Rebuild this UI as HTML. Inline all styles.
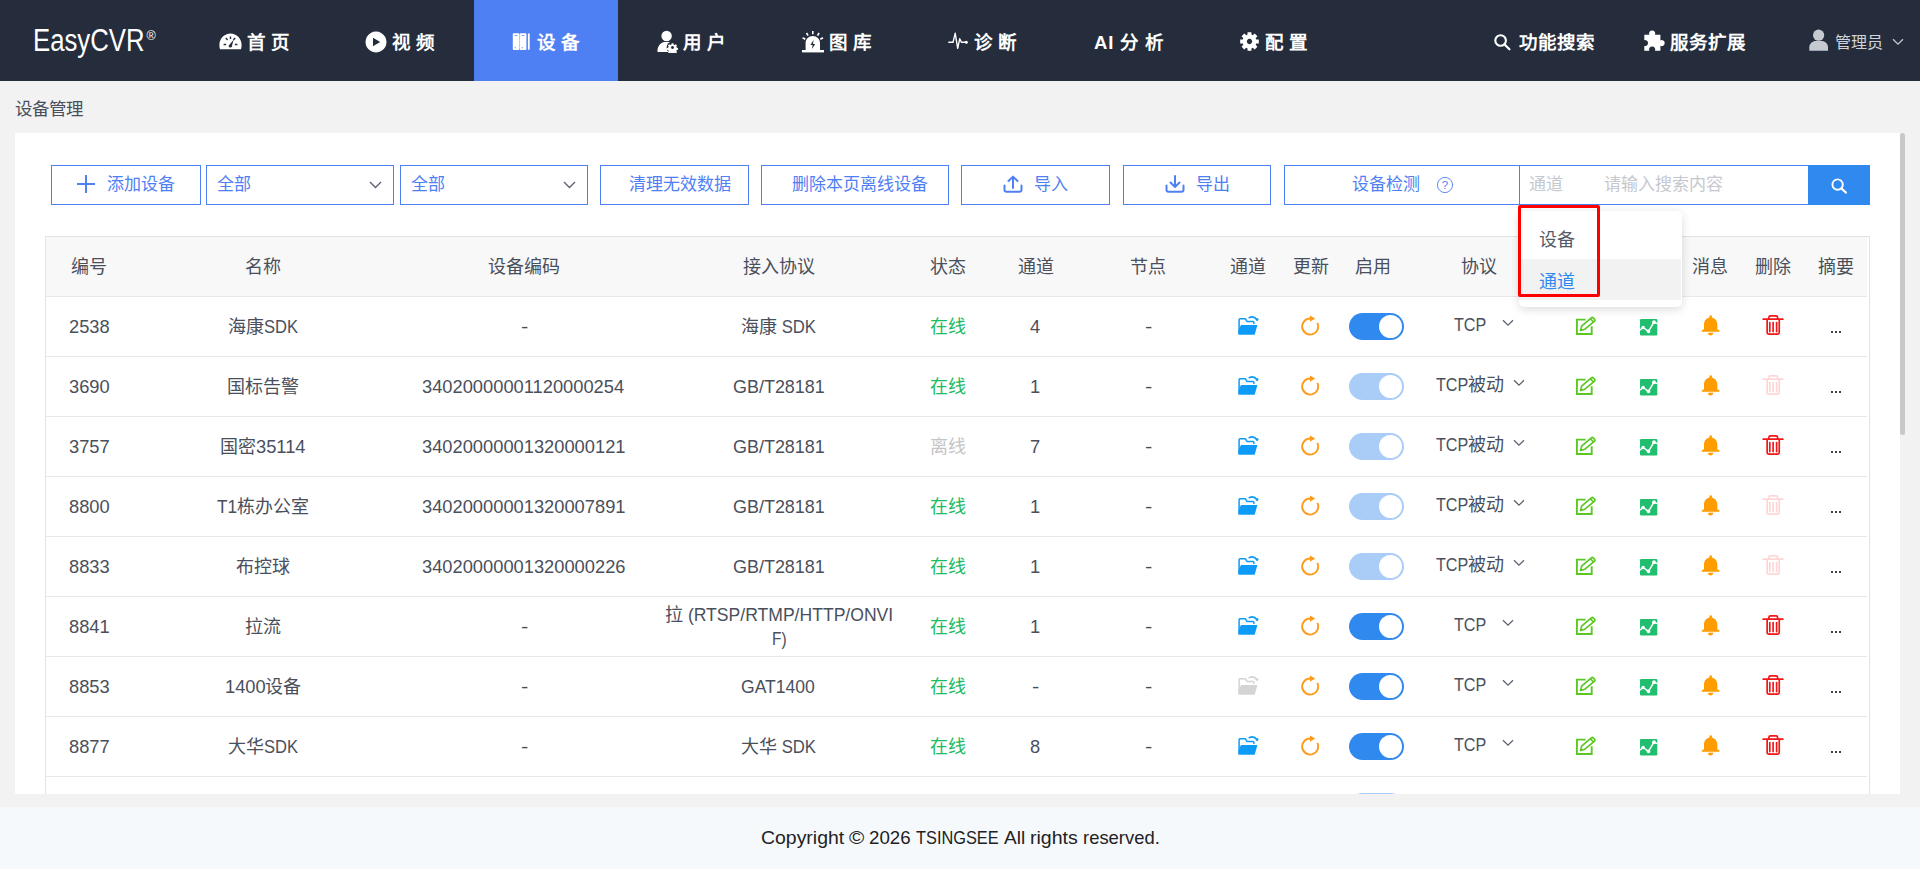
<!DOCTYPE html>
<html lang="zh-CN">
<head>
<meta charset="utf-8">
<style>
*{box-sizing:border-box;margin:0;padding:0}
html,body{width:1920px;height:869px;overflow:hidden;background:#f2f2f2;font-family:"Liberation Sans",sans-serif;color:#4a4f5c}
.abs{position:absolute}
#nav{position:absolute;left:0;top:0;width:1920px;height:81px;background:#252d3c}
#logo{position:absolute;left:33px;top:23px;font-size:31px;color:#fff;transform-origin:0 0;transform:scaleX(0.83);white-space:nowrap;line-height:36px}
#reg{position:absolute;left:146.5px;top:27.5px;font-size:12.5px;line-height:16px;color:#fff}
.tt{position:absolute;top:30px;font-size:18.5px;font-weight:bold;letter-spacing:5.4px;line-height:26px;white-space:nowrap;color:#fff}
#crumb{position:absolute;left:15px;top:96.5px;font-size:17.5px;line-height:24px;color:#4a4f5c}
#panel{position:absolute;left:15px;top:133px;width:1885px;height:661px;background:#fff}
#thumb{position:absolute;left:1900px;top:133px;width:5px;height:302px;background:#c8c8c8;border-radius:3px}
#footer{position:absolute;left:0;top:807px;width:1920px;height:62px;background:#f5f9fc}
#copy{position:absolute;left:0;width:1920px;top:19px;text-align:center;font-size:19px;line-height:24px;color:#222}
.btn{position:absolute;top:165px;height:40px;border:1px solid #4f80f3;color:#4f80f3;font-size:17px;line-height:38px;white-space:nowrap}
.btn span{position:absolute;top:0}
.btn svg{position:absolute}
.c{position:absolute;width:300px;margin-left:-150px;text-align:center;font-size:18px;line-height:60px;white-space:nowrap}
.ico{position:absolute}
.tog{position:absolute;width:55px;height:27px;border-radius:14px;background:#2f89ee}
.tog i{position:absolute;right:1.7px;top:1.7px;width:23.4px;height:23.4px;border-radius:50%;background:#fff}
.tog.dis{background:#a9cdf6}

.l{font-size:19px}

</style>
</head>
<body>
<div id="nav">
<div id="logo">EasyCVR</div><div id="reg">®</div>
<div class="abs" style="left:474px;top:0;width:144px;height:81px;background:#4f80f3"></div>
<svg class="abs" style="left:219px;top:33px" width="23" height="17" viewBox="0 0 23 17">
<path fill="#fff" fill-rule="evenodd" d="M1,16.2 L22,16.2 C22.4,15 22.6,13.6 22.6,12 C22.6,5.6 17.6,0.6 11.5,0.6 C5.4,0.6 0.4,5.6 0.4,12 C0.4,13.6 0.6,15 1,16.2 Z
M10.8,3.5 h1.4 v2.4 h-1.4 z M4.6,10.8 h2.5 v1.4 h-2.5 z M15.9,10.8 h2.5 v1.4 h-2.5 z
M6.3,5.6 l1,-1 l1.8,1.8 l-1,1 z M16.7,5.6 l-1,-1 l-1.8,1.8 l1,1 z
M10,12.2 a1.6,1.6 0 1 0 3,0.6 l1.6,-6 z"/></svg>
<svg class="abs" style="left:365px;top:31px" width="22" height="22" viewBox="0 0 22 22">
<path fill="#fff" fill-rule="evenodd" d="M11,0.5 a10.5,10.5 0 1 0 0.01,0 z M8,6.8 L15.2,11 L8,15.2 z"/></svg>
<svg class="abs" style="left:512px;top:33px" width="19" height="17" viewBox="0 0 19 17">
<path fill="#fff" fill-rule="evenodd" d="M1.8,0.3 h4.6 a1,1 0 0 1 1,1 v14.6 a1,1 0 0 1 -1,1 h-4.6 a1,1 0 0 1 -1,-1 v-14.6 a1,1 0 0 1 1,-1 z M2.7,2.2 h2.8 v0.8 h-2.8 z M2.7,14.2 h1.1 v1 h-1.1 z
M8.8,0.3 h4.6 a1,1 0 0 1 1,1 v14.6 a1,1 0 0 1 -1,1 h-4.6 a1,1 0 0 1 -1,-1 v-14.6 a1,1 0 0 1 1,-1 z M9.7,2.2 h2.8 v0.8 h-2.8 z M9.7,14.2 h1.1 v1 h-1.1 z
M15.9,0.5 h1.8 v16.2 h-1.8 z"/></svg>
<svg class="abs" style="left:656px;top:30px" width="23" height="23" viewBox="0 0 23 23">
<circle cx="10.6" cy="6" r="5.2" fill="#fff"/>
<path fill="#fff" d="M1.5,22 C1,17 4,13 8,12 L13,12 C14,12.4 15,13 15.6,13.6 A5,5 0 0 0 13,22 Z"/>
<circle cx="16.5" cy="17.5" r="5.9" fill="#252d3c"/><g transform="translate(16.5,17.5) scale(0.92)"><path fill="#fff" fill-rule="evenodd" d="M-0.9,-4.6 h1.8 l0.3,1.3 l1.2,0.6 l1.2,-0.7 l1.3,1.3 l-0.7,1.2 l0.5,1.2 l1.3,0.3 v1.8 l-1.3,0.3 l-0.5,1.2 l0.7,1.2 l-1.3,1.3 l-1.2,-0.7 l-1.2,0.5 l-0.3,1.3 h-1.8 l-0.3,-1.3 l-1.2,-0.5 l-1.2,0.7 l-1.3,-1.3 l0.7,-1.2 l-0.5,-1.2 l-1.3,-0.3 v-1.8 l1.3,-0.3 l0.5,-1.2 l-0.7,-1.2 l1.3,-1.3 l1.2,0.7 l1.2,-0.6 z M0,-1.6 a1.6,1.6 0 1 0 0.01,0 z"/></g></svg>
<svg class="abs" style="left:801px;top:30px" width="24" height="24" viewBox="0 0 24 24">
<path fill="#fff" fill-rule="evenodd" d="M4.6,20.3 V13 C4.6,9 7.8,6 11.8,6 C15.8,6 19,9 19,13 V20.3 Z M12.6,10 L9.4,15 h2.2 l-0.6,4 l3.2,-5 h-2.2 z"/>
<rect x="1" y="20" width="22" height="2.4" fill="#fff"/>
<path stroke="#fff" stroke-width="1.6" d="M11.8,1 v3.3 M5.5,3 l1.6,2.7 M18.1,3 l-1.6,2.7 M1.6,7.8 l2.7,1.5 M22,7.8 l-2.7,1.5"/></svg>
<svg class="abs" style="left:948px;top:32px" width="21" height="18" viewBox="0 0 21 18">
<path fill="none" stroke="#fff" stroke-width="1.4" stroke-linejoin="round" stroke-linecap="round" d="M0.8,10.3 H5 L7.2,1.3 L9.7,16.3 L11.7,6.8 L13.4,10.3 H18"/><circle cx="18.3" cy="10.3" r="1.5" fill="#fff"/></svg>
<svg class="abs" style="left:1239px;top:31px" width="21" height="21" viewBox="-10.5 -10.5 21 21"><path fill="#fff" fill-rule="evenodd" d="M-2.10,-6.68 L-1.89,-9.31 L1.89,-9.31 L2.10,-6.68 L3.23,-6.21 L5.24,-7.92 L7.92,-5.24 L6.21,-3.23 L6.68,-2.10 L9.31,-1.89 L9.31,1.89 L6.68,2.10 L6.21,3.23 L7.92,5.24 L5.24,7.92 L3.23,6.21 L2.10,6.68 L1.89,9.31 L-1.89,9.31 L-2.10,6.68 L-3.23,6.21 L-5.24,7.92 L-7.92,5.24 L-6.21,3.23 L-6.68,2.10 L-9.31,1.89 L-9.31,-1.89 L-6.68,-2.10 L-6.21,-3.23 L-7.92,-5.24 L-5.24,-7.92 L-3.23,-6.21 Z M0,-2.70 a2.70,2.70 0 1 0 0.01,0 z"/></svg>
<svg class="abs" style="left:1493px;top:33px" width="19" height="19" viewBox="0 0 19 19">
<circle cx="7.6" cy="7.5" r="5.3" fill="none" stroke="#fff" stroke-width="2.1"/><path stroke="#fff" stroke-width="2.3" stroke-linecap="round" d="M11.6,11.5 L16.4,16.2"/></svg>
<svg class="abs" style="left:1643px;top:30px" width="23" height="22" viewBox="0 0 23 22">
<path fill="#fff" d="M1.3,4.8 H6.3 A3.1,3.1 0 1 1 12,4.8 H17.4 V10.4 A3,3 0 1 1 17.4,15.8 V20.8 H12 A3.1,3.1 0 1 0 6.3,20.8 H1.3 V16 A3,3 0 1 0 1.3,10.2 Z"/></svg>
<svg class="abs" style="left:1809px;top:29px" width="20" height="23" viewBox="0 0 20 23">
<circle cx="9.6" cy="6.2" r="5.6" fill="#c6c9d0"/><path fill="#c6c9d0" d="M0.3,21.8 V18.6 C0.3,14.4 3.5,12 7,12 H12.4 C16,12 19,14.4 19,18.6 V21.8 Z"/></svg>
<svg class="abs" style="left:1892px;top:38px" width="12" height="8" viewBox="0 0 12 8">
<path fill="none" stroke="#c6c9d0" stroke-width="1.3" d="M1,1.2 L6,6.2 L11,1.2"/></svg>
<div class="tt" style="left:247px">首页</div>
<div class="tt" style="left:392px">视频</div>
<div class="tt" style="left:537px">设备</div>
<div class="tt" style="left:683px">用户</div>
<div class="tt" style="left:829px">图库</div>
<div class="tt" style="left:974px">诊断</div>
<div class="tt" style="left:1265px">配置</div>
<div class="tt" style="left:1094px;letter-spacing:1px">AI</div><div class="tt" style="left:1120.4px">分析</div>
<div class="tt" style="left:1519px;letter-spacing:0">功能搜索</div>
<div class="tt" style="left:1670px;letter-spacing:0">服务扩展</div>
<div class="tt" style="left:1835px;letter-spacing:0;font-weight:normal;font-size:16px;color:#d0d3d8">管理员</div>
</div>
<div id="crumb">设备管理</div>
<div id="panel"></div>
<div id="thumb"></div>
<div class="btn" style="left:51px;width:150px"><svg style="left:24px;top:8px" width="20" height="20" viewBox="0 0 20 20"><path stroke="#4f80f3" stroke-width="2" d="M10,1 V19 M1,10 H19"/></svg><span style="left:55px">添加设备</span></div>
<div class="btn" style="left:206px;width:188px"><span style="left:10px">全部</span><svg style="left:162px;top:15px" width="13" height="8" viewBox="0 0 13 8"><path fill="none" stroke="#5b6270" stroke-width="1.4" d="M1,1 L6.5,6.5 L12,1"/></svg></div>
<div class="btn" style="left:400px;width:188px"><span style="left:10px">全部</span><svg style="left:162px;top:15px" width="13" height="8" viewBox="0 0 13 8"><path fill="none" stroke="#5b6270" stroke-width="1.4" d="M1,1 L6.5,6.5 L12,1"/></svg></div>
<div class="btn" style="left:600px;width:149px"><span style="left:28px">清理无效数据</span></div>
<div class="btn" style="left:761px;width:188px"><span style="left:30px">删除本页离线设备</span></div>
<div class="btn" style="left:961px;width:149px"><svg style="left:41px;top:9px" width="20" height="18" viewBox="0 0 20 18"><path fill="none" stroke="#4f80f3" stroke-width="2" stroke-linecap="round" stroke-linejoin="round" d="M10,13 V2 M5.5,6 L10,1.6 L14.5,6 M1.5,10.5 V14.8 A2,2 0 0 0 3.5,16.8 H16.5 A2,2 0 0 0 18.5,14.8 V10.5"/></svg><span style="left:72px">导入</span></div>
<div class="btn" style="left:1123px;width:148px"><svg style="left:41px;top:9px" width="20" height="18" viewBox="0 0 20 18"><path fill="none" stroke="#4f80f3" stroke-width="2" stroke-linecap="round" stroke-linejoin="round" d="M10,1 V12 M5.5,7.5 L10,12 L14.5,7.5 M1.5,10.5 V14.8 A2,2 0 0 0 3.5,16.8 H16.5 A2,2 0 0 0 18.5,14.8 V10.5"/></svg><span style="left:72px">导出</span></div>
<div class="btn" style="left:1284px;width:236px"><span style="left:67px">设备检测</span><svg style="left:151px;top:10px" width="18" height="18" viewBox="0 0 18 18"><circle cx="9" cy="9" r="7.6" fill="none" stroke="#4f80f3" stroke-width="0.9"/><text x="9" y="13.2" text-anchor="middle" font-size="11.5" fill="#4f80f3" font-family="Liberation Sans">?</text></svg></div>
<div class="btn" style="left:1519px;width:290px;border-left:0"><span style="left:10px;color:#c5c8ce">通道</span><span style="left:85px;color:#c5c8ce">请输入搜索内容</span></div>
<div class="abs" style="left:1808px;top:165px;width:62px;height:40px;background:#2f89ee"></div>
<svg class="abs" style="left:1830px;top:177px" width="20" height="20" viewBox="0 0 20 20"><circle cx="7.6" cy="7.6" r="5.2" fill="none" stroke="#fff" stroke-width="1.9"/><path stroke="#fff" stroke-width="2.1" stroke-linecap="round" d="M11.6,11.6 L16,15.6"/></svg>
<div class="abs" style="left:45px;top:236px;width:1824px;height:560px;border-left:1px solid #e3e3e3;border-top:1px solid #e3e3e3"></div>
<div class="abs" style="left:1869px;top:236px;width:1px;height:558px;background:#e3e3e3"></div>
<div class="abs" style="left:46px;top:237px;width:1821px;height:59px;background:#f8f8f8"></div>
<div class="abs" style="left:46px;top:296px;width:1821px;height:1px;background:#e8e8e8"></div>
<div class="abs" style="left:46px;top:356px;width:1821px;height:1px;background:#e8e8e8"></div>
<div class="abs" style="left:46px;top:416px;width:1821px;height:1px;background:#e8e8e8"></div>
<div class="abs" style="left:46px;top:476px;width:1821px;height:1px;background:#e8e8e8"></div>
<div class="abs" style="left:46px;top:536px;width:1821px;height:1px;background:#e8e8e8"></div>
<div class="abs" style="left:46px;top:596px;width:1821px;height:1px;background:#e8e8e8"></div>
<div class="abs" style="left:46px;top:656px;width:1821px;height:1px;background:#e8e8e8"></div>
<div class="abs" style="left:46px;top:716px;width:1821px;height:1px;background:#e8e8e8"></div>
<div class="abs" style="left:46px;top:776px;width:1821px;height:1px;background:#e8e8e8"></div>
<div class="abs" style="left:46px;top:836px;width:1821px;height:1px;background:#e8e8e8"></div>
<div class="c" style="left:89.0px;top:237.0px;">编号</div>
<div class="c" style="left:263.0px;top:237.0px;">名称</div>
<div class="c" style="left:524.0px;top:237.0px;">设备编码</div>
<div class="c" style="left:779.0px;top:237.0px;">接入协议</div>
<div class="c" style="left:948.0px;top:237.0px;">状态</div>
<div class="c" style="left:1035.5px;top:237.0px;">通道</div>
<div class="c" style="left:1148.0px;top:237.0px;">节点</div>
<div class="c" style="left:1248.0px;top:237.0px;">通道</div>
<div class="c" style="left:1310.5px;top:237.0px;">更新</div>
<div class="c" style="left:1373.0px;top:237.0px;">启用</div>
<div class="c" style="left:1479.0px;top:237.0px;">协议</div>
<div class="c" style="left:1585.0px;top:237.0px;">编辑</div>
<div class="c" style="left:1648.0px;top:237.0px;">监控</div>
<div class="c" style="left:1710.0px;top:237.0px;">消息</div>
<div class="c" style="left:1773.0px;top:237.0px;">删除</div>
<div class="c" style="left:1836.0px;top:237.0px;">摘要</div>
<div class="c" style="left:89.0px;top:297.0px;"><span class="l" style="display:inline-block;width:40.70px"><span style="display:inline-block;transform:scaleX(0.9628);transform-origin:0 0">2538</span></span></div>
<div class="c" style="left:263.0px;top:297.0px;">海康<span class="l" style="display:inline-block;width:34.03px"><span style="display:inline-block;transform:scaleX(0.8711);transform-origin:0 0">SDK</span></span></div>
<div class="c" style="left:524.0px;top:297.0px;"><span class="l" style="display:inline-block;width:7.28px"><span style="display:inline-block;transform:scaleX(1.1507);transform-origin:0 0">-</span></span></div>
<div class="c" style="left:779.0px;top:297.0px;">海康<span class="l" style="display:inline-block;width:39.02px"><span style="display:inline-block;transform:scaleX(0.8799);transform-origin:0 0">&nbsp;SDK</span></span></div>
<div class="c" style="left:948.0px;top:297.0px;color:#1dbb5f">在线</div>
<div class="c" style="left:1035.5px;top:297.0px;"><span class="l" style="display:inline-block;width:10.17px"><span style="display:inline-block;transform:scaleX(0.9628);transform-origin:0 0">4</span></span></div>
<div class="c" style="left:1148.0px;top:297.0px;"><span class="l" style="display:inline-block;width:7.28px"><span style="display:inline-block;transform:scaleX(1.1507);transform-origin:0 0">-</span></span></div>
<svg class="ico" style="left:1238.0px;top:316px" width="22" height="20" viewBox="0 0 22 20"><path fill="none" stroke="#0d9bf7" stroke-width="1.5" stroke-linejoin="round" stroke-linecap="round" d="M1.1,17 V3.8 Q1.1,2.85 2,2.85 H7.5 L8.9,5.45 H15 Q15.9,5.45 15.9,6.3 V7.6"/><path fill="#0d9bf7" d="M0.35,18.7 L0.35,14 L3,8.9 H19.4 L16.7,18.7 Z"/><path fill="none" stroke="#0d9bf7" stroke-width="1.6" stroke-linecap="round" d="M11.2,1.7 Q15.5,-0.6 19.2,3.7"/><circle cx="19.1" cy="3.6" r="1.4" fill="#0d9bf7"/></svg>
<svg class="ico" style="left:1300.0px;top:315px" width="22" height="22" viewBox="0 0 22 22"><path fill="none" stroke="#ff9a1a" stroke-width="1.9" d="M10.2,3.45 A8.05,8.05 0 1 0 17.37,7.85"/><path fill="#ff9a1a" d="M10,0.5 L15.2,3.4 L10,6.8 Z"/></svg>
<div class="tog" style="left:1349.0px;top:313px"><i></i></div>
<div class="c" style="left:1470.0px;top:295.0px;"><span class="l" style="display:inline-block;width:32.21px"><span style="display:inline-block;transform:scaleX(0.8477);transform-origin:0 0">TCP</span></span></div>
<svg class="ico" style="left:1502px;top:319px" width="12" height="8" viewBox="0 0 12 8"><path fill="none" stroke="#5b6270" stroke-width="1.3" d="M1,1.2 L6,6.2 L11,1.2"/></svg>
<svg class="ico" style="left:1575.0px;top:315px" width="22" height="22" viewBox="0 0 22 22"><path fill="none" stroke="#5ac725" stroke-width="1.9" d="M10.6,4.65 H1.9 V19.05 H16.7 V11.2"/><path fill="none" stroke="#5ac725" stroke-width="1.7" stroke-linejoin="round" d="M5.6,15.4 L6.6,11.2 L16.3,2.9 Q17.3,2.1 18.2,2.9 L19.7,4.4 Q20.4,5.3 19.5,6.1 L9.9,14.2 Z M15.4,3.8 L18.6,7"/></svg>
<svg class="ico" style="left:1639.8px;top:319px" width="19" height="18" viewBox="0 0 19 18"><rect x="0" y="0" width="17.3" height="16.4" rx="1.2" fill="#20be6e"/><path fill="none" stroke="#fff" stroke-width="1.5" stroke-linejoin="round" d="M0,11.1 L3.1,8.5 L8.5,12.4 L14,3.2 L17.3,4.6"/><circle cx="3.1" cy="8.5" r="1.8" fill="#fff"/><circle cx="8.5" cy="12.4" r="1.8" fill="#fff"/><circle cx="14" cy="3.2" r="1.9" fill="#fff"/></svg>
<svg class="ico" style="left:1700.0px;top:315px" width="21" height="22" viewBox="0 0 21 22"><path fill="#ff9c00" d="M9.4,0.6 H11.9 V2.5 C15.3,3.4 17.3,6.2 17.3,9.6 V13.6 C17.3,14.6 18,15 19.5,15.2 V16.7 H1.8 V15.2 C3.3,15 4,14.6 4,13.6 V9.6 C4,6.2 6,3.4 9.4,2.5 Z"/><path fill="#ff9c00" d="M7.9,17.8 H13.2 C13.2,19.4 12,20.4 10.55,20.4 C9.1,20.4 7.9,19.4 7.9,17.8 Z"/></svg>
<svg class="ico" style="left:1760.0px;top:315px" width="24" height="22" viewBox="0 0 24 22"><path fill="none" stroke="#f01818" stroke-width="1.7" stroke-linecap="round" d="M3.2,4.15 H22.9 M8.9,3.6 V2.4 Q8.9,0.9 10.4,0.9 H16.1 Q17.6,0.9 17.6,2.4 V3.6 M7.15,4.8 V17.3 Q7.15,19.15 9,19.15 H17.4 Q19.25,19.15 19.25,17.3 V4.8 M9.8,7.6 V16.6 M13.1,7.6 V16.6 M16.6,7.6 V16.6"/></svg>
<div class="abs" style="left:1830.7px;top:331px;width:2.4px;height:2px;background:#3a4050"></div><div class="abs" style="left:1834.9px;top:331px;width:2.4px;height:2px;background:#3a4050"></div><div class="abs" style="left:1839.1px;top:331px;width:2.4px;height:2px;background:#3a4050"></div>
<div class="c" style="left:89.0px;top:357.0px;"><span class="l" style="display:inline-block;width:40.70px"><span style="display:inline-block;transform:scaleX(0.9628);transform-origin:0 0">3690</span></span></div>
<div class="c" style="left:263.0px;top:357.0px;">国标告警</div>
<div class="c" style="left:524.0px;top:357.0px;"><span class="l" style="display:inline-block;width:203.48px"><span style="display:inline-block;transform:scaleX(0.9628);transform-origin:0 0">34020000001120000254</span></span></div>
<div class="c" style="left:779.0px;top:357.0px;"><span class="l" style="display:inline-block;width:91.80px"><span style="display:inline-block;transform:scaleX(0.9447);transform-origin:0 0">GB/T28181</span></span></div>
<div class="c" style="left:948.0px;top:357.0px;color:#1dbb5f">在线</div>
<div class="c" style="left:1035.5px;top:357.0px;"><span class="l" style="display:inline-block;width:10.17px"><span style="display:inline-block;transform:scaleX(0.9628);transform-origin:0 0">1</span></span></div>
<div class="c" style="left:1148.0px;top:357.0px;"><span class="l" style="display:inline-block;width:7.28px"><span style="display:inline-block;transform:scaleX(1.1507);transform-origin:0 0">-</span></span></div>
<svg class="ico" style="left:1238.0px;top:376px" width="22" height="20" viewBox="0 0 22 20"><path fill="none" stroke="#0d9bf7" stroke-width="1.5" stroke-linejoin="round" stroke-linecap="round" d="M1.1,17 V3.8 Q1.1,2.85 2,2.85 H7.5 L8.9,5.45 H15 Q15.9,5.45 15.9,6.3 V7.6"/><path fill="#0d9bf7" d="M0.35,18.7 L0.35,14 L3,8.9 H19.4 L16.7,18.7 Z"/><path fill="none" stroke="#0d9bf7" stroke-width="1.6" stroke-linecap="round" d="M11.2,1.7 Q15.5,-0.6 19.2,3.7"/><circle cx="19.1" cy="3.6" r="1.4" fill="#0d9bf7"/></svg>
<svg class="ico" style="left:1300.0px;top:375px" width="22" height="22" viewBox="0 0 22 22"><path fill="none" stroke="#ff9a1a" stroke-width="1.9" d="M10.2,3.45 A8.05,8.05 0 1 0 17.37,7.85"/><path fill="#ff9a1a" d="M10,0.5 L15.2,3.4 L10,6.8 Z"/></svg>
<div class="tog dis" style="left:1349.0px;top:373px"><i></i></div>
<div class="c" style="left:1470.0px;top:355.0px;"><span class="l" style="display:inline-block;width:32.21px"><span style="display:inline-block;transform:scaleX(0.8477);transform-origin:0 0">TCP</span></span>被动</div>
<svg class="ico" style="left:1513px;top:379px" width="12" height="8" viewBox="0 0 12 8"><path fill="none" stroke="#5b6270" stroke-width="1.3" d="M1,1.2 L6,6.2 L11,1.2"/></svg>
<svg class="ico" style="left:1575.0px;top:375px" width="22" height="22" viewBox="0 0 22 22"><path fill="none" stroke="#5ac725" stroke-width="1.9" d="M10.6,4.65 H1.9 V19.05 H16.7 V11.2"/><path fill="none" stroke="#5ac725" stroke-width="1.7" stroke-linejoin="round" d="M5.6,15.4 L6.6,11.2 L16.3,2.9 Q17.3,2.1 18.2,2.9 L19.7,4.4 Q20.4,5.3 19.5,6.1 L9.9,14.2 Z M15.4,3.8 L18.6,7"/></svg>
<svg class="ico" style="left:1639.8px;top:379px" width="19" height="18" viewBox="0 0 19 18"><rect x="0" y="0" width="17.3" height="16.4" rx="1.2" fill="#20be6e"/><path fill="none" stroke="#fff" stroke-width="1.5" stroke-linejoin="round" d="M0,11.1 L3.1,8.5 L8.5,12.4 L14,3.2 L17.3,4.6"/><circle cx="3.1" cy="8.5" r="1.8" fill="#fff"/><circle cx="8.5" cy="12.4" r="1.8" fill="#fff"/><circle cx="14" cy="3.2" r="1.9" fill="#fff"/></svg>
<svg class="ico" style="left:1700.0px;top:375px" width="21" height="22" viewBox="0 0 21 22"><path fill="#ff9c00" d="M9.4,0.6 H11.9 V2.5 C15.3,3.4 17.3,6.2 17.3,9.6 V13.6 C17.3,14.6 18,15 19.5,15.2 V16.7 H1.8 V15.2 C3.3,15 4,14.6 4,13.6 V9.6 C4,6.2 6,3.4 9.4,2.5 Z"/><path fill="#ff9c00" d="M7.9,17.8 H13.2 C13.2,19.4 12,20.4 10.55,20.4 C9.1,20.4 7.9,19.4 7.9,17.8 Z"/></svg>
<svg class="ico" style="left:1760.0px;top:375px" width="24" height="22" viewBox="0 0 24 22"><path fill="none" stroke="#ffd6d6" stroke-width="1.7" stroke-linecap="round" d="M3.2,4.15 H22.9 M8.9,3.6 V2.4 Q8.9,0.9 10.4,0.9 H16.1 Q17.6,0.9 17.6,2.4 V3.6 M7.15,4.8 V17.3 Q7.15,19.15 9,19.15 H17.4 Q19.25,19.15 19.25,17.3 V4.8 M9.8,7.6 V16.6 M13.1,7.6 V16.6 M16.6,7.6 V16.6"/></svg>
<div class="abs" style="left:1830.7px;top:391px;width:2.4px;height:2px;background:#3a4050"></div><div class="abs" style="left:1834.9px;top:391px;width:2.4px;height:2px;background:#3a4050"></div><div class="abs" style="left:1839.1px;top:391px;width:2.4px;height:2px;background:#3a4050"></div>
<div class="c" style="left:89.0px;top:417.0px;"><span class="l" style="display:inline-block;width:40.70px"><span style="display:inline-block;transform:scaleX(0.9628);transform-origin:0 0">3757</span></span></div>
<div class="c" style="left:263.0px;top:417.0px;">国密<span class="l" style="display:inline-block;width:50.87px"><span style="display:inline-block;transform:scaleX(0.9628);transform-origin:0 0">35114</span></span></div>
<div class="c" style="left:524.0px;top:417.0px;"><span class="l" style="display:inline-block;width:203.48px"><span style="display:inline-block;transform:scaleX(0.9628);transform-origin:0 0">34020000001320000121</span></span></div>
<div class="c" style="left:779.0px;top:417.0px;"><span class="l" style="display:inline-block;width:91.80px"><span style="display:inline-block;transform:scaleX(0.9447);transform-origin:0 0">GB/T28181</span></span></div>
<div class="c" style="left:948.0px;top:417.0px;color:#c5c5c5">离线</div>
<div class="c" style="left:1035.5px;top:417.0px;"><span class="l" style="display:inline-block;width:10.17px"><span style="display:inline-block;transform:scaleX(0.9628);transform-origin:0 0">7</span></span></div>
<div class="c" style="left:1148.0px;top:417.0px;"><span class="l" style="display:inline-block;width:7.28px"><span style="display:inline-block;transform:scaleX(1.1507);transform-origin:0 0">-</span></span></div>
<svg class="ico" style="left:1238.0px;top:436px" width="22" height="20" viewBox="0 0 22 20"><path fill="none" stroke="#0d9bf7" stroke-width="1.5" stroke-linejoin="round" stroke-linecap="round" d="M1.1,17 V3.8 Q1.1,2.85 2,2.85 H7.5 L8.9,5.45 H15 Q15.9,5.45 15.9,6.3 V7.6"/><path fill="#0d9bf7" d="M0.35,18.7 L0.35,14 L3,8.9 H19.4 L16.7,18.7 Z"/><path fill="none" stroke="#0d9bf7" stroke-width="1.6" stroke-linecap="round" d="M11.2,1.7 Q15.5,-0.6 19.2,3.7"/><circle cx="19.1" cy="3.6" r="1.4" fill="#0d9bf7"/></svg>
<svg class="ico" style="left:1300.0px;top:435px" width="22" height="22" viewBox="0 0 22 22"><path fill="none" stroke="#ff9a1a" stroke-width="1.9" d="M10.2,3.45 A8.05,8.05 0 1 0 17.37,7.85"/><path fill="#ff9a1a" d="M10,0.5 L15.2,3.4 L10,6.8 Z"/></svg>
<div class="tog dis" style="left:1349.0px;top:433px"><i></i></div>
<div class="c" style="left:1470.0px;top:415.0px;"><span class="l" style="display:inline-block;width:32.21px"><span style="display:inline-block;transform:scaleX(0.8477);transform-origin:0 0">TCP</span></span>被动</div>
<svg class="ico" style="left:1513px;top:439px" width="12" height="8" viewBox="0 0 12 8"><path fill="none" stroke="#5b6270" stroke-width="1.3" d="M1,1.2 L6,6.2 L11,1.2"/></svg>
<svg class="ico" style="left:1575.0px;top:435px" width="22" height="22" viewBox="0 0 22 22"><path fill="none" stroke="#5ac725" stroke-width="1.9" d="M10.6,4.65 H1.9 V19.05 H16.7 V11.2"/><path fill="none" stroke="#5ac725" stroke-width="1.7" stroke-linejoin="round" d="M5.6,15.4 L6.6,11.2 L16.3,2.9 Q17.3,2.1 18.2,2.9 L19.7,4.4 Q20.4,5.3 19.5,6.1 L9.9,14.2 Z M15.4,3.8 L18.6,7"/></svg>
<svg class="ico" style="left:1639.8px;top:439px" width="19" height="18" viewBox="0 0 19 18"><rect x="0" y="0" width="17.3" height="16.4" rx="1.2" fill="#20be6e"/><path fill="none" stroke="#fff" stroke-width="1.5" stroke-linejoin="round" d="M0,11.1 L3.1,8.5 L8.5,12.4 L14,3.2 L17.3,4.6"/><circle cx="3.1" cy="8.5" r="1.8" fill="#fff"/><circle cx="8.5" cy="12.4" r="1.8" fill="#fff"/><circle cx="14" cy="3.2" r="1.9" fill="#fff"/></svg>
<svg class="ico" style="left:1700.0px;top:435px" width="21" height="22" viewBox="0 0 21 22"><path fill="#ff9c00" d="M9.4,0.6 H11.9 V2.5 C15.3,3.4 17.3,6.2 17.3,9.6 V13.6 C17.3,14.6 18,15 19.5,15.2 V16.7 H1.8 V15.2 C3.3,15 4,14.6 4,13.6 V9.6 C4,6.2 6,3.4 9.4,2.5 Z"/><path fill="#ff9c00" d="M7.9,17.8 H13.2 C13.2,19.4 12,20.4 10.55,20.4 C9.1,20.4 7.9,19.4 7.9,17.8 Z"/></svg>
<svg class="ico" style="left:1760.0px;top:435px" width="24" height="22" viewBox="0 0 24 22"><path fill="none" stroke="#f01818" stroke-width="1.7" stroke-linecap="round" d="M3.2,4.15 H22.9 M8.9,3.6 V2.4 Q8.9,0.9 10.4,0.9 H16.1 Q17.6,0.9 17.6,2.4 V3.6 M7.15,4.8 V17.3 Q7.15,19.15 9,19.15 H17.4 Q19.25,19.15 19.25,17.3 V4.8 M9.8,7.6 V16.6 M13.1,7.6 V16.6 M16.6,7.6 V16.6"/></svg>
<div class="abs" style="left:1830.7px;top:451px;width:2.4px;height:2px;background:#3a4050"></div><div class="abs" style="left:1834.9px;top:451px;width:2.4px;height:2px;background:#3a4050"></div><div class="abs" style="left:1839.1px;top:451px;width:2.4px;height:2px;background:#3a4050"></div>
<div class="c" style="left:89.0px;top:477.0px;"><span class="l" style="display:inline-block;width:40.70px"><span style="display:inline-block;transform:scaleX(0.9628);transform-origin:0 0">8800</span></span></div>
<div class="c" style="left:263.0px;top:477.0px;"><span class="l" style="display:inline-block;width:20.18px"><span style="display:inline-block;transform:scaleX(0.9103);transform-origin:0 0">T1</span></span>栋办公室</div>
<div class="c" style="left:524.0px;top:477.0px;"><span class="l" style="display:inline-block;width:203.48px"><span style="display:inline-block;transform:scaleX(0.9628);transform-origin:0 0">34020000001320007891</span></span></div>
<div class="c" style="left:779.0px;top:477.0px;"><span class="l" style="display:inline-block;width:91.80px"><span style="display:inline-block;transform:scaleX(0.9447);transform-origin:0 0">GB/T28181</span></span></div>
<div class="c" style="left:948.0px;top:477.0px;color:#1dbb5f">在线</div>
<div class="c" style="left:1035.5px;top:477.0px;"><span class="l" style="display:inline-block;width:10.17px"><span style="display:inline-block;transform:scaleX(0.9628);transform-origin:0 0">1</span></span></div>
<div class="c" style="left:1148.0px;top:477.0px;"><span class="l" style="display:inline-block;width:7.28px"><span style="display:inline-block;transform:scaleX(1.1507);transform-origin:0 0">-</span></span></div>
<svg class="ico" style="left:1238.0px;top:496px" width="22" height="20" viewBox="0 0 22 20"><path fill="none" stroke="#0d9bf7" stroke-width="1.5" stroke-linejoin="round" stroke-linecap="round" d="M1.1,17 V3.8 Q1.1,2.85 2,2.85 H7.5 L8.9,5.45 H15 Q15.9,5.45 15.9,6.3 V7.6"/><path fill="#0d9bf7" d="M0.35,18.7 L0.35,14 L3,8.9 H19.4 L16.7,18.7 Z"/><path fill="none" stroke="#0d9bf7" stroke-width="1.6" stroke-linecap="round" d="M11.2,1.7 Q15.5,-0.6 19.2,3.7"/><circle cx="19.1" cy="3.6" r="1.4" fill="#0d9bf7"/></svg>
<svg class="ico" style="left:1300.0px;top:495px" width="22" height="22" viewBox="0 0 22 22"><path fill="none" stroke="#ff9a1a" stroke-width="1.9" d="M10.2,3.45 A8.05,8.05 0 1 0 17.37,7.85"/><path fill="#ff9a1a" d="M10,0.5 L15.2,3.4 L10,6.8 Z"/></svg>
<div class="tog dis" style="left:1349.0px;top:493px"><i></i></div>
<div class="c" style="left:1470.0px;top:475.0px;"><span class="l" style="display:inline-block;width:32.21px"><span style="display:inline-block;transform:scaleX(0.8477);transform-origin:0 0">TCP</span></span>被动</div>
<svg class="ico" style="left:1513px;top:499px" width="12" height="8" viewBox="0 0 12 8"><path fill="none" stroke="#5b6270" stroke-width="1.3" d="M1,1.2 L6,6.2 L11,1.2"/></svg>
<svg class="ico" style="left:1575.0px;top:495px" width="22" height="22" viewBox="0 0 22 22"><path fill="none" stroke="#5ac725" stroke-width="1.9" d="M10.6,4.65 H1.9 V19.05 H16.7 V11.2"/><path fill="none" stroke="#5ac725" stroke-width="1.7" stroke-linejoin="round" d="M5.6,15.4 L6.6,11.2 L16.3,2.9 Q17.3,2.1 18.2,2.9 L19.7,4.4 Q20.4,5.3 19.5,6.1 L9.9,14.2 Z M15.4,3.8 L18.6,7"/></svg>
<svg class="ico" style="left:1639.8px;top:499px" width="19" height="18" viewBox="0 0 19 18"><rect x="0" y="0" width="17.3" height="16.4" rx="1.2" fill="#20be6e"/><path fill="none" stroke="#fff" stroke-width="1.5" stroke-linejoin="round" d="M0,11.1 L3.1,8.5 L8.5,12.4 L14,3.2 L17.3,4.6"/><circle cx="3.1" cy="8.5" r="1.8" fill="#fff"/><circle cx="8.5" cy="12.4" r="1.8" fill="#fff"/><circle cx="14" cy="3.2" r="1.9" fill="#fff"/></svg>
<svg class="ico" style="left:1700.0px;top:495px" width="21" height="22" viewBox="0 0 21 22"><path fill="#ff9c00" d="M9.4,0.6 H11.9 V2.5 C15.3,3.4 17.3,6.2 17.3,9.6 V13.6 C17.3,14.6 18,15 19.5,15.2 V16.7 H1.8 V15.2 C3.3,15 4,14.6 4,13.6 V9.6 C4,6.2 6,3.4 9.4,2.5 Z"/><path fill="#ff9c00" d="M7.9,17.8 H13.2 C13.2,19.4 12,20.4 10.55,20.4 C9.1,20.4 7.9,19.4 7.9,17.8 Z"/></svg>
<svg class="ico" style="left:1760.0px;top:495px" width="24" height="22" viewBox="0 0 24 22"><path fill="none" stroke="#ffd6d6" stroke-width="1.7" stroke-linecap="round" d="M3.2,4.15 H22.9 M8.9,3.6 V2.4 Q8.9,0.9 10.4,0.9 H16.1 Q17.6,0.9 17.6,2.4 V3.6 M7.15,4.8 V17.3 Q7.15,19.15 9,19.15 H17.4 Q19.25,19.15 19.25,17.3 V4.8 M9.8,7.6 V16.6 M13.1,7.6 V16.6 M16.6,7.6 V16.6"/></svg>
<div class="abs" style="left:1830.7px;top:511px;width:2.4px;height:2px;background:#3a4050"></div><div class="abs" style="left:1834.9px;top:511px;width:2.4px;height:2px;background:#3a4050"></div><div class="abs" style="left:1839.1px;top:511px;width:2.4px;height:2px;background:#3a4050"></div>
<div class="c" style="left:89.0px;top:537.0px;"><span class="l" style="display:inline-block;width:40.70px"><span style="display:inline-block;transform:scaleX(0.9628);transform-origin:0 0">8833</span></span></div>
<div class="c" style="left:263.0px;top:537.0px;">布控球</div>
<div class="c" style="left:524.0px;top:537.0px;"><span class="l" style="display:inline-block;width:203.48px"><span style="display:inline-block;transform:scaleX(0.9628);transform-origin:0 0">34020000001320000226</span></span></div>
<div class="c" style="left:779.0px;top:537.0px;"><span class="l" style="display:inline-block;width:91.80px"><span style="display:inline-block;transform:scaleX(0.9447);transform-origin:0 0">GB/T28181</span></span></div>
<div class="c" style="left:948.0px;top:537.0px;color:#1dbb5f">在线</div>
<div class="c" style="left:1035.5px;top:537.0px;"><span class="l" style="display:inline-block;width:10.17px"><span style="display:inline-block;transform:scaleX(0.9628);transform-origin:0 0">1</span></span></div>
<div class="c" style="left:1148.0px;top:537.0px;"><span class="l" style="display:inline-block;width:7.28px"><span style="display:inline-block;transform:scaleX(1.1507);transform-origin:0 0">-</span></span></div>
<svg class="ico" style="left:1238.0px;top:556px" width="22" height="20" viewBox="0 0 22 20"><path fill="none" stroke="#0d9bf7" stroke-width="1.5" stroke-linejoin="round" stroke-linecap="round" d="M1.1,17 V3.8 Q1.1,2.85 2,2.85 H7.5 L8.9,5.45 H15 Q15.9,5.45 15.9,6.3 V7.6"/><path fill="#0d9bf7" d="M0.35,18.7 L0.35,14 L3,8.9 H19.4 L16.7,18.7 Z"/><path fill="none" stroke="#0d9bf7" stroke-width="1.6" stroke-linecap="round" d="M11.2,1.7 Q15.5,-0.6 19.2,3.7"/><circle cx="19.1" cy="3.6" r="1.4" fill="#0d9bf7"/></svg>
<svg class="ico" style="left:1300.0px;top:555px" width="22" height="22" viewBox="0 0 22 22"><path fill="none" stroke="#ff9a1a" stroke-width="1.9" d="M10.2,3.45 A8.05,8.05 0 1 0 17.37,7.85"/><path fill="#ff9a1a" d="M10,0.5 L15.2,3.4 L10,6.8 Z"/></svg>
<div class="tog dis" style="left:1349.0px;top:553px"><i></i></div>
<div class="c" style="left:1470.0px;top:535.0px;"><span class="l" style="display:inline-block;width:32.21px"><span style="display:inline-block;transform:scaleX(0.8477);transform-origin:0 0">TCP</span></span>被动</div>
<svg class="ico" style="left:1513px;top:559px" width="12" height="8" viewBox="0 0 12 8"><path fill="none" stroke="#5b6270" stroke-width="1.3" d="M1,1.2 L6,6.2 L11,1.2"/></svg>
<svg class="ico" style="left:1575.0px;top:555px" width="22" height="22" viewBox="0 0 22 22"><path fill="none" stroke="#5ac725" stroke-width="1.9" d="M10.6,4.65 H1.9 V19.05 H16.7 V11.2"/><path fill="none" stroke="#5ac725" stroke-width="1.7" stroke-linejoin="round" d="M5.6,15.4 L6.6,11.2 L16.3,2.9 Q17.3,2.1 18.2,2.9 L19.7,4.4 Q20.4,5.3 19.5,6.1 L9.9,14.2 Z M15.4,3.8 L18.6,7"/></svg>
<svg class="ico" style="left:1639.8px;top:559px" width="19" height="18" viewBox="0 0 19 18"><rect x="0" y="0" width="17.3" height="16.4" rx="1.2" fill="#20be6e"/><path fill="none" stroke="#fff" stroke-width="1.5" stroke-linejoin="round" d="M0,11.1 L3.1,8.5 L8.5,12.4 L14,3.2 L17.3,4.6"/><circle cx="3.1" cy="8.5" r="1.8" fill="#fff"/><circle cx="8.5" cy="12.4" r="1.8" fill="#fff"/><circle cx="14" cy="3.2" r="1.9" fill="#fff"/></svg>
<svg class="ico" style="left:1700.0px;top:555px" width="21" height="22" viewBox="0 0 21 22"><path fill="#ff9c00" d="M9.4,0.6 H11.9 V2.5 C15.3,3.4 17.3,6.2 17.3,9.6 V13.6 C17.3,14.6 18,15 19.5,15.2 V16.7 H1.8 V15.2 C3.3,15 4,14.6 4,13.6 V9.6 C4,6.2 6,3.4 9.4,2.5 Z"/><path fill="#ff9c00" d="M7.9,17.8 H13.2 C13.2,19.4 12,20.4 10.55,20.4 C9.1,20.4 7.9,19.4 7.9,17.8 Z"/></svg>
<svg class="ico" style="left:1760.0px;top:555px" width="24" height="22" viewBox="0 0 24 22"><path fill="none" stroke="#ffd6d6" stroke-width="1.7" stroke-linecap="round" d="M3.2,4.15 H22.9 M8.9,3.6 V2.4 Q8.9,0.9 10.4,0.9 H16.1 Q17.6,0.9 17.6,2.4 V3.6 M7.15,4.8 V17.3 Q7.15,19.15 9,19.15 H17.4 Q19.25,19.15 19.25,17.3 V4.8 M9.8,7.6 V16.6 M13.1,7.6 V16.6 M16.6,7.6 V16.6"/></svg>
<div class="abs" style="left:1830.7px;top:571px;width:2.4px;height:2px;background:#3a4050"></div><div class="abs" style="left:1834.9px;top:571px;width:2.4px;height:2px;background:#3a4050"></div><div class="abs" style="left:1839.1px;top:571px;width:2.4px;height:2px;background:#3a4050"></div>
<div class="c" style="left:89.0px;top:597.0px;"><span class="l" style="display:inline-block;width:40.70px"><span style="display:inline-block;transform:scaleX(0.9628);transform-origin:0 0">8841</span></span></div>
<div class="c" style="left:263.0px;top:597.0px;">拉流</div>
<div class="c" style="left:524.0px;top:597.0px;"><span class="l" style="display:inline-block;width:7.28px"><span style="display:inline-block;transform:scaleX(1.1507);transform-origin:0 0">-</span></span></div>
<div class="c" style="left:779.0px;top:602.5px;line-height:24px">拉<span class="l" style="display:inline-block;width:210.83px"><span style="display:inline-block;transform:scaleX(0.9247);transform-origin:0 0">&nbsp;(RTSP/RTMP/HTTP/ONVI</span></span><br><span class="l" style="display:inline-block;width:14.56px"><span style="display:inline-block;transform:scaleX(0.8119);transform-origin:0 0">F)</span></span></div>
<div class="c" style="left:948.0px;top:597.0px;color:#1dbb5f">在线</div>
<div class="c" style="left:1035.5px;top:597.0px;"><span class="l" style="display:inline-block;width:10.17px"><span style="display:inline-block;transform:scaleX(0.9628);transform-origin:0 0">1</span></span></div>
<div class="c" style="left:1148.0px;top:597.0px;"><span class="l" style="display:inline-block;width:7.28px"><span style="display:inline-block;transform:scaleX(1.1507);transform-origin:0 0">-</span></span></div>
<svg class="ico" style="left:1238.0px;top:616px" width="22" height="20" viewBox="0 0 22 20"><path fill="none" stroke="#0d9bf7" stroke-width="1.5" stroke-linejoin="round" stroke-linecap="round" d="M1.1,17 V3.8 Q1.1,2.85 2,2.85 H7.5 L8.9,5.45 H15 Q15.9,5.45 15.9,6.3 V7.6"/><path fill="#0d9bf7" d="M0.35,18.7 L0.35,14 L3,8.9 H19.4 L16.7,18.7 Z"/><path fill="none" stroke="#0d9bf7" stroke-width="1.6" stroke-linecap="round" d="M11.2,1.7 Q15.5,-0.6 19.2,3.7"/><circle cx="19.1" cy="3.6" r="1.4" fill="#0d9bf7"/></svg>
<svg class="ico" style="left:1300.0px;top:615px" width="22" height="22" viewBox="0 0 22 22"><path fill="none" stroke="#ff9a1a" stroke-width="1.9" d="M10.2,3.45 A8.05,8.05 0 1 0 17.37,7.85"/><path fill="#ff9a1a" d="M10,0.5 L15.2,3.4 L10,6.8 Z"/></svg>
<div class="tog" style="left:1349.0px;top:613px"><i></i></div>
<div class="c" style="left:1470.0px;top:595.0px;"><span class="l" style="display:inline-block;width:32.21px"><span style="display:inline-block;transform:scaleX(0.8477);transform-origin:0 0">TCP</span></span></div>
<svg class="ico" style="left:1502px;top:619px" width="12" height="8" viewBox="0 0 12 8"><path fill="none" stroke="#5b6270" stroke-width="1.3" d="M1,1.2 L6,6.2 L11,1.2"/></svg>
<svg class="ico" style="left:1575.0px;top:615px" width="22" height="22" viewBox="0 0 22 22"><path fill="none" stroke="#5ac725" stroke-width="1.9" d="M10.6,4.65 H1.9 V19.05 H16.7 V11.2"/><path fill="none" stroke="#5ac725" stroke-width="1.7" stroke-linejoin="round" d="M5.6,15.4 L6.6,11.2 L16.3,2.9 Q17.3,2.1 18.2,2.9 L19.7,4.4 Q20.4,5.3 19.5,6.1 L9.9,14.2 Z M15.4,3.8 L18.6,7"/></svg>
<svg class="ico" style="left:1639.8px;top:619px" width="19" height="18" viewBox="0 0 19 18"><rect x="0" y="0" width="17.3" height="16.4" rx="1.2" fill="#20be6e"/><path fill="none" stroke="#fff" stroke-width="1.5" stroke-linejoin="round" d="M0,11.1 L3.1,8.5 L8.5,12.4 L14,3.2 L17.3,4.6"/><circle cx="3.1" cy="8.5" r="1.8" fill="#fff"/><circle cx="8.5" cy="12.4" r="1.8" fill="#fff"/><circle cx="14" cy="3.2" r="1.9" fill="#fff"/></svg>
<svg class="ico" style="left:1700.0px;top:615px" width="21" height="22" viewBox="0 0 21 22"><path fill="#ff9c00" d="M9.4,0.6 H11.9 V2.5 C15.3,3.4 17.3,6.2 17.3,9.6 V13.6 C17.3,14.6 18,15 19.5,15.2 V16.7 H1.8 V15.2 C3.3,15 4,14.6 4,13.6 V9.6 C4,6.2 6,3.4 9.4,2.5 Z"/><path fill="#ff9c00" d="M7.9,17.8 H13.2 C13.2,19.4 12,20.4 10.55,20.4 C9.1,20.4 7.9,19.4 7.9,17.8 Z"/></svg>
<svg class="ico" style="left:1760.0px;top:615px" width="24" height="22" viewBox="0 0 24 22"><path fill="none" stroke="#f01818" stroke-width="1.7" stroke-linecap="round" d="M3.2,4.15 H22.9 M8.9,3.6 V2.4 Q8.9,0.9 10.4,0.9 H16.1 Q17.6,0.9 17.6,2.4 V3.6 M7.15,4.8 V17.3 Q7.15,19.15 9,19.15 H17.4 Q19.25,19.15 19.25,17.3 V4.8 M9.8,7.6 V16.6 M13.1,7.6 V16.6 M16.6,7.6 V16.6"/></svg>
<div class="abs" style="left:1830.7px;top:631px;width:2.4px;height:2px;background:#3a4050"></div><div class="abs" style="left:1834.9px;top:631px;width:2.4px;height:2px;background:#3a4050"></div><div class="abs" style="left:1839.1px;top:631px;width:2.4px;height:2px;background:#3a4050"></div>
<div class="c" style="left:89.0px;top:657.0px;"><span class="l" style="display:inline-block;width:40.70px"><span style="display:inline-block;transform:scaleX(0.9628);transform-origin:0 0">8853</span></span></div>
<div class="c" style="left:263.0px;top:657.0px;"><span class="l" style="display:inline-block;width:40.70px"><span style="display:inline-block;transform:scaleX(0.9628);transform-origin:0 0">1400</span></span>设备</div>
<div class="c" style="left:524.0px;top:657.0px;"><span class="l" style="display:inline-block;width:7.28px"><span style="display:inline-block;transform:scaleX(1.1507);transform-origin:0 0">-</span></span></div>
<div class="c" style="left:779.0px;top:657.0px;"><span class="l" style="display:inline-block;width:75.11px"><span style="display:inline-block;transform:scaleX(0.9236);transform-origin:0 0">GAT1400</span></span></div>
<div class="c" style="left:948.0px;top:657.0px;color:#1dbb5f">在线</div>
<div class="c" style="left:1035.5px;top:657.0px;"><span class="l" style="display:inline-block;width:7.28px"><span style="display:inline-block;transform:scaleX(1.1507);transform-origin:0 0">-</span></span></div>
<div class="c" style="left:1148.0px;top:657.0px;"><span class="l" style="display:inline-block;width:7.28px"><span style="display:inline-block;transform:scaleX(1.1507);transform-origin:0 0">-</span></span></div>
<svg class="ico" style="left:1238.0px;top:676px" width="22" height="20" viewBox="0 0 22 20"><path fill="none" stroke="#d4d4d4" stroke-width="1.5" stroke-linejoin="round" stroke-linecap="round" d="M1.1,17 V3.8 Q1.1,2.85 2,2.85 H7.5 L8.9,5.45 H15 Q15.9,5.45 15.9,6.3 V7.6"/><path fill="#d4d4d4" d="M0.35,18.7 L0.35,14 L3,8.9 H19.4 L16.7,18.7 Z"/><path fill="none" stroke="#d4d4d4" stroke-width="1.6" stroke-linecap="round" d="M11.2,1.7 Q15.5,-0.6 19.2,3.7"/><circle cx="19.1" cy="3.6" r="1.4" fill="#d4d4d4"/></svg>
<svg class="ico" style="left:1300.0px;top:675px" width="22" height="22" viewBox="0 0 22 22"><path fill="none" stroke="#ff9a1a" stroke-width="1.9" d="M10.2,3.45 A8.05,8.05 0 1 0 17.37,7.85"/><path fill="#ff9a1a" d="M10,0.5 L15.2,3.4 L10,6.8 Z"/></svg>
<div class="tog" style="left:1349.0px;top:673px"><i></i></div>
<div class="c" style="left:1470.0px;top:655.0px;"><span class="l" style="display:inline-block;width:32.21px"><span style="display:inline-block;transform:scaleX(0.8477);transform-origin:0 0">TCP</span></span></div>
<svg class="ico" style="left:1502px;top:679px" width="12" height="8" viewBox="0 0 12 8"><path fill="none" stroke="#5b6270" stroke-width="1.3" d="M1,1.2 L6,6.2 L11,1.2"/></svg>
<svg class="ico" style="left:1575.0px;top:675px" width="22" height="22" viewBox="0 0 22 22"><path fill="none" stroke="#5ac725" stroke-width="1.9" d="M10.6,4.65 H1.9 V19.05 H16.7 V11.2"/><path fill="none" stroke="#5ac725" stroke-width="1.7" stroke-linejoin="round" d="M5.6,15.4 L6.6,11.2 L16.3,2.9 Q17.3,2.1 18.2,2.9 L19.7,4.4 Q20.4,5.3 19.5,6.1 L9.9,14.2 Z M15.4,3.8 L18.6,7"/></svg>
<svg class="ico" style="left:1639.8px;top:679px" width="19" height="18" viewBox="0 0 19 18"><rect x="0" y="0" width="17.3" height="16.4" rx="1.2" fill="#20be6e"/><path fill="none" stroke="#fff" stroke-width="1.5" stroke-linejoin="round" d="M0,11.1 L3.1,8.5 L8.5,12.4 L14,3.2 L17.3,4.6"/><circle cx="3.1" cy="8.5" r="1.8" fill="#fff"/><circle cx="8.5" cy="12.4" r="1.8" fill="#fff"/><circle cx="14" cy="3.2" r="1.9" fill="#fff"/></svg>
<svg class="ico" style="left:1700.0px;top:675px" width="21" height="22" viewBox="0 0 21 22"><path fill="#ff9c00" d="M9.4,0.6 H11.9 V2.5 C15.3,3.4 17.3,6.2 17.3,9.6 V13.6 C17.3,14.6 18,15 19.5,15.2 V16.7 H1.8 V15.2 C3.3,15 4,14.6 4,13.6 V9.6 C4,6.2 6,3.4 9.4,2.5 Z"/><path fill="#ff9c00" d="M7.9,17.8 H13.2 C13.2,19.4 12,20.4 10.55,20.4 C9.1,20.4 7.9,19.4 7.9,17.8 Z"/></svg>
<svg class="ico" style="left:1760.0px;top:675px" width="24" height="22" viewBox="0 0 24 22"><path fill="none" stroke="#f01818" stroke-width="1.7" stroke-linecap="round" d="M3.2,4.15 H22.9 M8.9,3.6 V2.4 Q8.9,0.9 10.4,0.9 H16.1 Q17.6,0.9 17.6,2.4 V3.6 M7.15,4.8 V17.3 Q7.15,19.15 9,19.15 H17.4 Q19.25,19.15 19.25,17.3 V4.8 M9.8,7.6 V16.6 M13.1,7.6 V16.6 M16.6,7.6 V16.6"/></svg>
<div class="abs" style="left:1830.7px;top:691px;width:2.4px;height:2px;background:#3a4050"></div><div class="abs" style="left:1834.9px;top:691px;width:2.4px;height:2px;background:#3a4050"></div><div class="abs" style="left:1839.1px;top:691px;width:2.4px;height:2px;background:#3a4050"></div>
<div class="c" style="left:89.0px;top:717.0px;"><span class="l" style="display:inline-block;width:40.70px"><span style="display:inline-block;transform:scaleX(0.9628);transform-origin:0 0">8877</span></span></div>
<div class="c" style="left:263.0px;top:717.0px;">大华<span class="l" style="display:inline-block;width:34.03px"><span style="display:inline-block;transform:scaleX(0.8711);transform-origin:0 0">SDK</span></span></div>
<div class="c" style="left:524.0px;top:717.0px;"><span class="l" style="display:inline-block;width:7.28px"><span style="display:inline-block;transform:scaleX(1.1507);transform-origin:0 0">-</span></span></div>
<div class="c" style="left:779.0px;top:717.0px;">大华<span class="l" style="display:inline-block;width:39.02px"><span style="display:inline-block;transform:scaleX(0.8799);transform-origin:0 0">&nbsp;SDK</span></span></div>
<div class="c" style="left:948.0px;top:717.0px;color:#1dbb5f">在线</div>
<div class="c" style="left:1035.5px;top:717.0px;"><span class="l" style="display:inline-block;width:10.17px"><span style="display:inline-block;transform:scaleX(0.9628);transform-origin:0 0">8</span></span></div>
<div class="c" style="left:1148.0px;top:717.0px;"><span class="l" style="display:inline-block;width:7.28px"><span style="display:inline-block;transform:scaleX(1.1507);transform-origin:0 0">-</span></span></div>
<svg class="ico" style="left:1238.0px;top:736px" width="22" height="20" viewBox="0 0 22 20"><path fill="none" stroke="#0d9bf7" stroke-width="1.5" stroke-linejoin="round" stroke-linecap="round" d="M1.1,17 V3.8 Q1.1,2.85 2,2.85 H7.5 L8.9,5.45 H15 Q15.9,5.45 15.9,6.3 V7.6"/><path fill="#0d9bf7" d="M0.35,18.7 L0.35,14 L3,8.9 H19.4 L16.7,18.7 Z"/><path fill="none" stroke="#0d9bf7" stroke-width="1.6" stroke-linecap="round" d="M11.2,1.7 Q15.5,-0.6 19.2,3.7"/><circle cx="19.1" cy="3.6" r="1.4" fill="#0d9bf7"/></svg>
<svg class="ico" style="left:1300.0px;top:735px" width="22" height="22" viewBox="0 0 22 22"><path fill="none" stroke="#ff9a1a" stroke-width="1.9" d="M10.2,3.45 A8.05,8.05 0 1 0 17.37,7.85"/><path fill="#ff9a1a" d="M10,0.5 L15.2,3.4 L10,6.8 Z"/></svg>
<div class="tog" style="left:1349.0px;top:733px"><i></i></div>
<div class="c" style="left:1470.0px;top:715.0px;"><span class="l" style="display:inline-block;width:32.21px"><span style="display:inline-block;transform:scaleX(0.8477);transform-origin:0 0">TCP</span></span></div>
<svg class="ico" style="left:1502px;top:739px" width="12" height="8" viewBox="0 0 12 8"><path fill="none" stroke="#5b6270" stroke-width="1.3" d="M1,1.2 L6,6.2 L11,1.2"/></svg>
<svg class="ico" style="left:1575.0px;top:735px" width="22" height="22" viewBox="0 0 22 22"><path fill="none" stroke="#5ac725" stroke-width="1.9" d="M10.6,4.65 H1.9 V19.05 H16.7 V11.2"/><path fill="none" stroke="#5ac725" stroke-width="1.7" stroke-linejoin="round" d="M5.6,15.4 L6.6,11.2 L16.3,2.9 Q17.3,2.1 18.2,2.9 L19.7,4.4 Q20.4,5.3 19.5,6.1 L9.9,14.2 Z M15.4,3.8 L18.6,7"/></svg>
<svg class="ico" style="left:1639.8px;top:739px" width="19" height="18" viewBox="0 0 19 18"><rect x="0" y="0" width="17.3" height="16.4" rx="1.2" fill="#20be6e"/><path fill="none" stroke="#fff" stroke-width="1.5" stroke-linejoin="round" d="M0,11.1 L3.1,8.5 L8.5,12.4 L14,3.2 L17.3,4.6"/><circle cx="3.1" cy="8.5" r="1.8" fill="#fff"/><circle cx="8.5" cy="12.4" r="1.8" fill="#fff"/><circle cx="14" cy="3.2" r="1.9" fill="#fff"/></svg>
<svg class="ico" style="left:1700.0px;top:735px" width="21" height="22" viewBox="0 0 21 22"><path fill="#ff9c00" d="M9.4,0.6 H11.9 V2.5 C15.3,3.4 17.3,6.2 17.3,9.6 V13.6 C17.3,14.6 18,15 19.5,15.2 V16.7 H1.8 V15.2 C3.3,15 4,14.6 4,13.6 V9.6 C4,6.2 6,3.4 9.4,2.5 Z"/><path fill="#ff9c00" d="M7.9,17.8 H13.2 C13.2,19.4 12,20.4 10.55,20.4 C9.1,20.4 7.9,19.4 7.9,17.8 Z"/></svg>
<svg class="ico" style="left:1760.0px;top:735px" width="24" height="22" viewBox="0 0 24 22"><path fill="none" stroke="#f01818" stroke-width="1.7" stroke-linecap="round" d="M3.2,4.15 H22.9 M8.9,3.6 V2.4 Q8.9,0.9 10.4,0.9 H16.1 Q17.6,0.9 17.6,2.4 V3.6 M7.15,4.8 V17.3 Q7.15,19.15 9,19.15 H17.4 Q19.25,19.15 19.25,17.3 V4.8 M9.8,7.6 V16.6 M13.1,7.6 V16.6 M16.6,7.6 V16.6"/></svg>
<div class="abs" style="left:1830.7px;top:751px;width:2.4px;height:2px;background:#3a4050"></div><div class="abs" style="left:1834.9px;top:751px;width:2.4px;height:2px;background:#3a4050"></div><div class="abs" style="left:1839.1px;top:751px;width:2.4px;height:2px;background:#3a4050"></div>
<div class="tog dis" style="left:1349.0px;top:793px"><i></i></div>
<div class="abs" style="left:1519px;top:211px;width:163px;height:96px;background:#fff;border-radius:5px;box-shadow:0 2px 10px rgba(0,0,0,0.15)"></div>
<div class="abs" style="left:1519px;top:259px;width:162px;height:41px;background:#f2f2f2"></div>
<div class="abs" style="left:1539px;top:227.5px;font-size:18px;line-height:24px;color:#555b68">设备</div>
<div class="abs" style="left:1539px;top:270px;font-size:18px;line-height:24px;color:#2f89ee">通道</div>
<div class="abs" style="left:1518px;top:205px;width:82px;height:92px;border:3px solid #f00;border-radius:2px"></div>
<div class="abs" style="left:0;top:794px;width:1920px;height:13px;background:#f2f2f2"></div>
<div id="footer"><div id="copy"><span class="l" style="display:inline-block;width:83.14px"><span style="display:inline-block;transform:scaleX(1.0224);transform-origin:0 0">Copyright</span></span><span class="l" style="display:inline-block;width:5.10px"><span style="display:inline-block;transform:scaleX(0.9656);transform-origin:0 0">&nbsp;</span></span><span class="l" style="display:inline-block;width:15.25px"><span style="display:inline-block;transform:scaleX(1.0894);transform-origin:0 0">©</span></span><span class="l" style="display:inline-block;width:5.10px"><span style="display:inline-block;transform:scaleX(0.9656);transform-origin:0 0">&nbsp;</span></span><span class="l" style="display:inline-block;width:41.59px"><span style="display:inline-block;transform:scaleX(0.9839);transform-origin:0 0">2026</span></span><span class="l" style="display:inline-block;width:5.10px"><span style="display:inline-block;transform:scaleX(0.9656);transform-origin:0 0">&nbsp;</span></span><span class="l" style="display:inline-block;width:82.64px"><span style="display:inline-block;transform:scaleX(0.8601);transform-origin:0 0">TSINGSEE</span></span><span class="l" style="display:inline-block;width:5.10px"><span style="display:inline-block;transform:scaleX(0.9656);transform-origin:0 0">&nbsp;</span></span><span class="l" style="display:inline-block;width:21.13px"><span style="display:inline-block;transform:scaleX(1.0006);transform-origin:0 0">All</span></span><span class="l" style="display:inline-block;width:5.10px"><span style="display:inline-block;transform:scaleX(0.9656);transform-origin:0 0">&nbsp;</span></span><span class="l" style="display:inline-block;width:47.80px"><span style="display:inline-block;transform:scaleX(1.0289);transform-origin:0 0">rights</span></span><span class="l" style="display:inline-block;width:5.10px"><span style="display:inline-block;transform:scaleX(0.9656);transform-origin:0 0">&nbsp;</span></span><span class="l" style="display:inline-block;width:76.82px"><span style="display:inline-block;transform:scaleX(0.9699);transform-origin:0 0">reserved.</span></span></div></div>
</body>
</html>
